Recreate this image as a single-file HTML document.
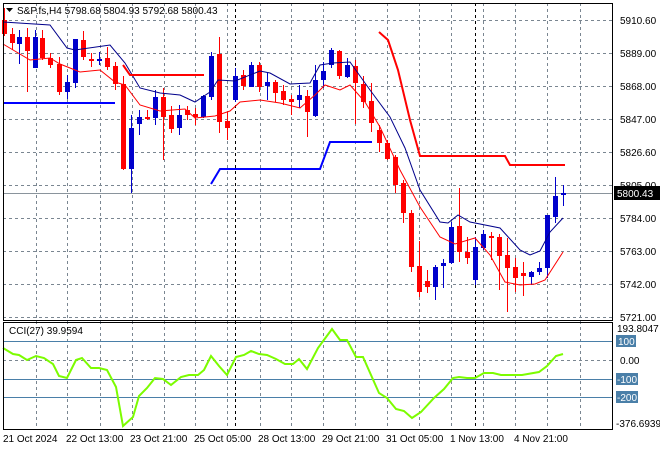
<!DOCTYPE html>
<html><head><meta charset="utf-8"><style>
body{margin:0;background:#fff;width:660px;height:450px;overflow:hidden}
svg{display:block;font-family:"Liberation Sans",sans-serif}
</style></head><body>
<svg id="s" width="660" height="450" xmlns="http://www.w3.org/2000/svg">
<rect width="660" height="450" fill="#fff"/>
<g id="grid" stroke="#7a8691" stroke-dasharray="3,3" stroke-width="1"></g>
<line x1="235.5" y1="3" x2="235.5" y2="430" stroke="#000" stroke-dasharray="3,3"/>
<line x1="475.5" y1="3" x2="475.5" y2="430" stroke="#000" stroke-dasharray="3,3"/>
<g stroke="#4a7fa8" stroke-width="1">
<line x1="3" y1="341.5" x2="613" y2="341.5"/><line x1="3" y1="379.5" x2="613" y2="379.5"/><line x1="3" y1="397.5" x2="613" y2="397.5"/>
</g>
<line x1="3" y1="360.5" x2="613" y2="360.5" stroke="#7a8691" stroke-dasharray="3,3"/>
<line x1="3" y1="193.5" x2="613" y2="193.5" stroke="#8a949c"/>
<g id="c"></g>
<polyline fill="none" stroke="#00008b" stroke-width="1" points="3,22 50,25 67,48 75,50 110,45 125,63 140,88 160,93 180,95 195,102 210,92 218,80 235,81 260,71 270,73 290,84 310,83 320,65 333,63 350,62 370,90 390,117 405,148 420,190 440,222 448,223 458,215 470,222 500,228 520,250 530,255 540,251 550,232 563,218"/>
<polyline fill="none" stroke="#f00" stroke-width="1" points="3,44 30,60 50,58 60,64 80,72 100,70 115,82 125,85 140,105 160,111 185,109 195,118 215,116 230,111 240,102 260,100 280,103 300,108 315,95 325,85 340,90 350,85 365,102 380,127 400,170 420,207 440,237 455,244 475,238 490,255 505,282 520,285 535,284 545,280 563,252"/>
<polyline fill="none" stroke="#f00" stroke-width="2" points="123,65 130,75 204,75"/>
<polyline fill="none" stroke="#f00" stroke-width="2" points="379,32 388,40 398,70 410,120 420,156 505,156 510,165 565,165"/>
<polyline fill="none" stroke="#00f" stroke-width="2" points="3,103 115,103"/>
<polyline fill="none" stroke="#00f" stroke-width="2" points="211,184 220,169 320,169 330,142 372,142"/>
<polyline fill="none" stroke="#7cfc00" stroke-width="2" points="3,348 13,354 19,355 27,360 36,356 44,358 53,364 59,376 67,378 76,360 82,358 91,368 99,368 107,370 116,387 123,426 133,417 139,396 147,388 155,378 163,379 171,385 181,377 189,375 198,375 204,370 211,356 219,366 227,375 236,357 244,355 251,351 259,354 267,355 276,359 285,364 293,364 299,359 307,369 318,348 332,329 340,340 347,340 356,357 363,357 379,393 387,398 396,409 404,411 412,418 421,412 434,398 444,389 453,378 459,377 467,378 475,378 484,373 493,373 501,375 522,375 539,372 547,366 556,356 563,354"/>
<g fill="none" stroke="#000" stroke-width="1">
<rect x="3.5" y="3.5" width="609" height="317"/>
<rect x="3.5" y="322.5" width="609" height="107"/>
</g>
<g font-size="10" fill="#000" id="lab">
<path d="M6 8 L13 8 L9.5 12 Z" fill="#000"/>
<text x="17" y="14">S&amp;P.fs,H4  5798.68 5804.93 5792.68 5800.43</text>
<text x="9" y="334">CCI(27) 39.9594</text>
<text x="620" y="24">5910.60</text><text x="620" y="57">5889.00</text><text x="620" y="90">5868.00</text><text x="620" y="123">5847.00</text><text x="620" y="156">5826.60</text><text x="620" y="189">5805.00</text><text x="620" y="222">5784.00</text><text x="620" y="255">5763.00</text><text x="620" y="288">5742.00</text><text x="620" y="321">5721.00</text>
<rect x="614" y="186" width="46" height="14" fill="#000"/><text x="617" y="197" fill="#fff">5800.43</text>
<text x="617" y="332">193.8047</text>
<rect x="616" y="335" width="20" height="12" fill="#4a7fa8"/><text x="618" y="345" fill="#fff">100</text>
<text x="620" y="364">0.00</text>
<rect x="616" y="373" width="22" height="12" fill="#4a7fa8"/><text x="617" y="383" fill="#fff">-100</text>
<rect x="616" y="391" width="22" height="12" fill="#4a7fa8"/><text x="617" y="401" fill="#fff">-200</text>
<text x="616" y="427">-376.6939</text>
<text x="3" y="442">21 Oct 2024</text><text x="66" y="442">22 Oct 13:00</text><text x="130" y="442">23 Oct 21:00</text><text x="194" y="442">25 Oct 05:00</text><text x="258" y="442">28 Oct 13:00</text><text x="322" y="442">29 Oct 21:00</text><text x="386" y="442">31 Oct 05:00</text><text x="450" y="442">1 Nov 13:00</text><text x="514" y="442">4 Nov 21:00</text>
</g>
</svg>
<script>
var NS="http://www.w3.org/2000/svg";
function el(p,t,a){var e=document.createElementNS(NS,t);for(var k in a)e.setAttribute(k,a[k]);p.appendChild(e);return e;}
var g=document.getElementById('grid');
[20,53,86,119,152,185,218,251,284,317].forEach(function(y){el(g,'line',{x1:3,y1:y+.5,x2:613,y2:y+.5});});
[36,67,100,132,164,195,227,260,291,323,355,387,419,451,483,515,547,580].forEach(function(x){if(x==235||x==475)return;el(g,'line',{x1:x+.5,y1:3,x2:x+.5,y2:430});});
var C=[
[4,'r',20,34,8,36],[12,'r',34,43,28,50],[19,'b',37,44,30,64],[27,'r',37,51,28,92],[35,'b',37,68,30,68],[42,'r',38,58,30,60],[50,'r',58,65,53,68],[59,'r',64,92,57,95],[67,'b',82,92,75,99],[75,'b',39,83,39,88],[83,'r',40,57,31,60],[91,'r',59,61,53,67],[99,'b',59,60,52,65],[107,'r',58,67,47,70],[115,'r',66,84,62,90],[123,'r',84,169,76,170],[131,'b',128,169,115,193],[139,'b',117,124,110,135],[147,'r',117,118,110,120],[155,'b',97,118,90,125],[163,'r',97,117,88,160],[171,'r',115,129,106,133],[179,'b',115,128,105,135],[187,'r',110,115,106,120],[195,'r',114,117,108,125],[203,'b',96,117,95,118],[211,'b',56,97,52,100],[219,'r',54,122,37,133],[227,'r',121,128,112,140],[235,'b',76,100,68,102],[243,'r',75,86,70,90],[251,'b',65,87,62,87],[259,'r',65,87,62,92],[267,'b',82,86,73,100],[275,'r',82,93,80,102],[283,'r',91,100,85,105],[291,'r',99,102,95,115],[299,'b',95,100,85,108],[307,'r',96,112,90,137],[315,'b',80,116,65,117],[323,'b',71,80,62,88],[331,'b',50,65,48,68],[339,'r',51,76,50,79],[347,'b',65,77,58,78],[355,'r',66,83,60,124],[363,'r',84,102,76,108],[371,'r',101,123,83,132],[379,'r',130,143,125,152],[387,'r',143,159,140,160],[395,'r',157,185,155,193],[403,'r',183,213,180,223],[411,'r',213,267,210,272],[419,'r',266,292,241,297],[427,'r',281,287,270,293],[435,'b',267,287,265,300],[443,'b',263,266,259,288],[451,'b',227,263,222,264],[459,'r',226,252,188,262],[467,'r',252,258,237,264],[475,'b',247,280,237,285],[483,'b',234,248,230,250],[491,'r',236,237,232,260],[499,'r',237,256,234,290],[507,'r',255,268,238,312],[515,'r',267,278,258,292],[523,'r',273,276,262,296],[531,'b',272,277,271,285],[539,'b',268,272,262,275],[547,'b',215,268,215,278],[555,'b',196,217,177,223],[563,'b',193,195,185,206]];
var cg=document.getElementById('c');
C.forEach(function(d){var col=d[1]=='r'?'#f00':'#00c';
el(cg,'line',{x1:d[0]+.5,y1:d[4],x2:d[0]+.5,y2:d[5],stroke:col,'stroke-width':1});
el(cg,'rect',{x:d[0]-2,y:d[2],width:5,height:Math.max(2,d[3]-d[2]),fill:col});});
</script>
</body></html>
